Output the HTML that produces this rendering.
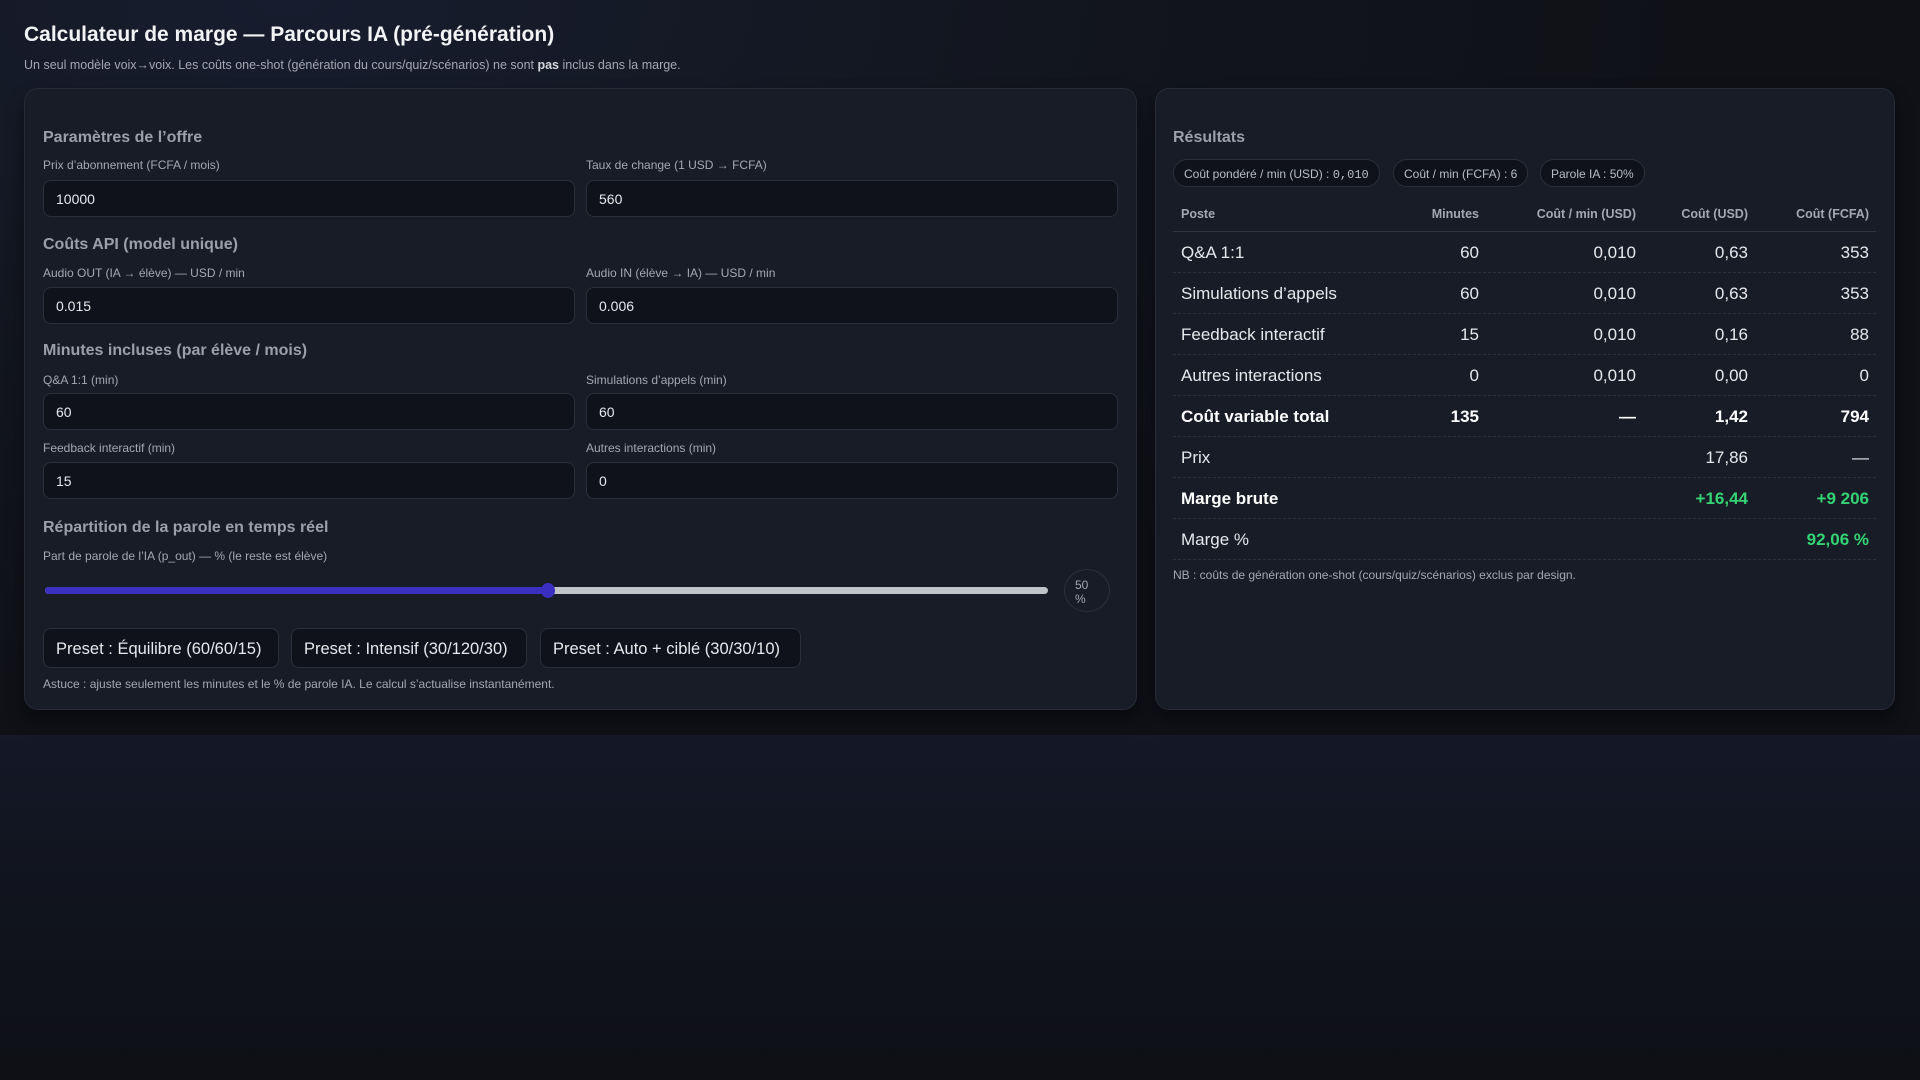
<!DOCTYPE html>
<html><head><meta charset="utf-8"><style>
*{box-sizing:border-box;margin:0;padding:0}
html{background:#0e1015;height:1080px}
body{width:1920px;height:735px;font-family:"Liberation Sans",sans-serif;color:#e6e8ec;position:relative;overflow:visible;
background:radial-gradient(ellipse 1400px 700px at 15% 0%,#171d2e 0%,#12151d 60%,#0f1117 100%);}
.after{position:absolute;left:0;top:735px;width:1920px;height:345px;background:linear-gradient(180deg,#141827 0%,#10131b 60%,#0e1015 100%)}
h1{position:absolute;left:24px;top:23px;font-size:21px;font-weight:700;color:#f2f3f5}
.sub{position:absolute;left:24px;top:58px;font-size:12.5px;color:#a3a8b3}
.sub b{color:#d5d8de}
.card{position:absolute;top:88px;height:622px;background:#181c26;border:1px solid #262b37;border-radius:14px;box-shadow:0 10px 18px rgba(0,0,0,.45)}
.h{position:absolute;font-size:16px;color:#9aa0ab;font-weight:600}
.lb{position:absolute;font-size:12px;color:#a3a8b3}
.in{position:absolute;height:37px;width:532px;background:#0f121a;border:1px solid #2a2f3b;border-radius:8px;font-size:14px;color:#e6e8ec;padding:10px 12px}
.btn{position:absolute;top:628px;height:40px;border:1px solid #2a2f3b;background:#0f121a;border-radius:8px;font-size:16.5px;color:#e6e8ec;padding:11px 12px;white-space:nowrap}
.chip{position:absolute;top:159px;height:28px;border:1px solid #2a2f3b;background:#0f121a;border-radius:14px;font-size:12px;color:#b9bdc6;padding:7px 10px;white-space:nowrap}
.mono{font-family:"Liberation Mono",monospace}
.row{position:absolute;left:1173px;width:703px;height:41px;border-bottom:1px dashed #2a2f3b;font-size:17px;color:#e6e8ec}
.row span{position:absolute;top:11px}
.c0{left:8px}.c1{right:397px}.c2{right:240px}.c3{right:128px}.c4{right:7px}
.b{font-weight:700;color:#fff}
.g{color:#34d374;font-weight:700}
</style></head><body>
<div class="after"></div>
<h1>Calculateur de marge — Parcours IA (pré-génération)</h1>
<div class="sub">Un seul modèle voix→voix. Les coûts one-shot (génération du cours/quiz/scénarios) ne sont <b>pas</b> inclus dans la marge.</div>

<div class="card" style="left:24px;width:1113px"></div>
<div class="h" style="left:43px;top:129px">Paramètres de l’offre</div>
<div class="lb" style="left:43px;top:158px">Prix d’abonnement (FCFA / mois)</div>
<div class="lb" style="left:586px;top:158px">Taux de change (1 USD → FCFA)</div>
<div class="in" style="left:43px;top:180px">10000</div>
<div class="in" style="left:586px;top:180px">560</div>
<div class="h" style="left:43px;top:236px">Coûts API (model unique)</div>
<div class="lb" style="left:43px;top:266px">Audio OUT (IA → élève) — USD / min</div>
<div class="lb" style="left:586px;top:266px">Audio IN (élève → IA) — USD / min</div>
<div class="in" style="left:43px;top:287px">0.015</div>
<div class="in" style="left:586px;top:287px">0.006</div>
<div class="h" style="left:43px;top:342px">Minutes incluses (par élève / mois)</div>
<div class="lb" style="left:43px;top:373px">Q&amp;A 1:1 (min)</div>
<div class="lb" style="left:586px;top:373px">Simulations d’appels (min)</div>
<div class="in" style="left:43px;top:393px">60</div>
<div class="in" style="left:586px;top:393px">60</div>
<div class="lb" style="left:43px;top:441px">Feedback interactif (min)</div>
<div class="lb" style="left:586px;top:441px">Autres interactions (min)</div>
<div class="in" style="left:43px;top:462px">15</div>
<div class="in" style="left:586px;top:462px">0</div>
<div class="h" style="left:43px;top:519px">Répartition de la parole en temps réel</div>
<div class="lb" style="left:43px;top:549px">Part de parole de l’IA (p_out) — % (le reste est élève)</div>
<div style="position:absolute;left:45px;top:587px;width:1003px;height:7px;background:#c0c3c7;border-radius:4px"></div>
<div style="position:absolute;left:45px;top:587px;width:503px;height:7px;background:#3a2fc0;border-radius:4px"></div>
<div style="position:absolute;left:541px;top:583px;width:14px;height:15px;background:#3a2fc0;border-radius:50%"></div>
<div style="position:absolute;left:1064px;top:569px;width:46px;height:43px;border:1px solid #2a2f3b;border-radius:50%;font-size:12px;color:#a3a8b3;padding:8px 0 0 10px;line-height:14px">50<br>%</div>
<div class="btn" style="left:43px;width:236px">Preset : Équilibre (60/60/15)</div>
<div class="btn" style="left:291px;width:236px">Preset : Intensif (30/120/30)</div>
<div class="btn" style="left:540px;width:261px">Preset : Auto + ciblé (30/30/10)</div>
<div class="lb" style="left:43px;top:677px">Astuce : ajuste seulement les minutes et le % de parole IA. Le calcul s’actualise instantanément.</div>

<div class="card" style="left:1155px;width:740px"></div>
<div class="h" style="left:1173px;top:129px">Résultats</div>
<div class="chip" style="left:1173px">Coût pondéré / min (USD) : <span class="mono">0,010</span></div>
<div class="chip" style="left:1393px">Coût / min (FCFA) : 6</div>
<div class="chip" style="left:1540px">Parole IA : 50%</div>
<div class="row" style="top:196px;height:36px;border-bottom:1px solid #2f3542;font-size:12.5px;color:#a3a8b3;font-weight:600">
<span class="c0">Poste</span><span class="c1">Minutes</span><span class="c2">Coût / min (USD)</span><span class="c3">Coût (USD)</span><span class="c4">Coût (FCFA)</span></div>
<div class="row" style="top:232px"><span class="c0">Q&amp;A 1:1</span><span class="c1">60</span><span class="c2">0,010</span><span class="c3">0,63</span><span class="c4">353</span></div>
<div class="row" style="top:273px"><span class="c0">Simulations d’appels</span><span class="c1">60</span><span class="c2">0,010</span><span class="c3">0,63</span><span class="c4">353</span></div>
<div class="row" style="top:314px"><span class="c0">Feedback interactif</span><span class="c1">15</span><span class="c2">0,010</span><span class="c3">0,16</span><span class="c4">88</span></div>
<div class="row" style="top:355px"><span class="c0">Autres interactions</span><span class="c1">0</span><span class="c2">0,010</span><span class="c3">0,00</span><span class="c4">0</span></div>
<div class="row b" style="top:396px"><span class="c0">Coût variable total</span><span class="c1">135</span><span class="c2">—</span><span class="c3">1,42</span><span class="c4">794</span></div>
<div class="row" style="top:437px"><span class="c0">Prix</span><span class="c3">17,86</span><span class="c4">—</span></div>
<div class="row" style="top:478px"><span class="c0 b">Marge brute</span><span class="c3 g">+16,44</span><span class="c4 g">+9 206</span></div>
<div class="row" style="top:519px"><span class="c0">Marge %</span><span class="c4 g">92,06 %</span></div>
<div class="lb" style="left:1173px;top:568px">NB : coûts de génération one-shot (cours/quiz/scénarios) exclus par design.</div>
</body></html>
